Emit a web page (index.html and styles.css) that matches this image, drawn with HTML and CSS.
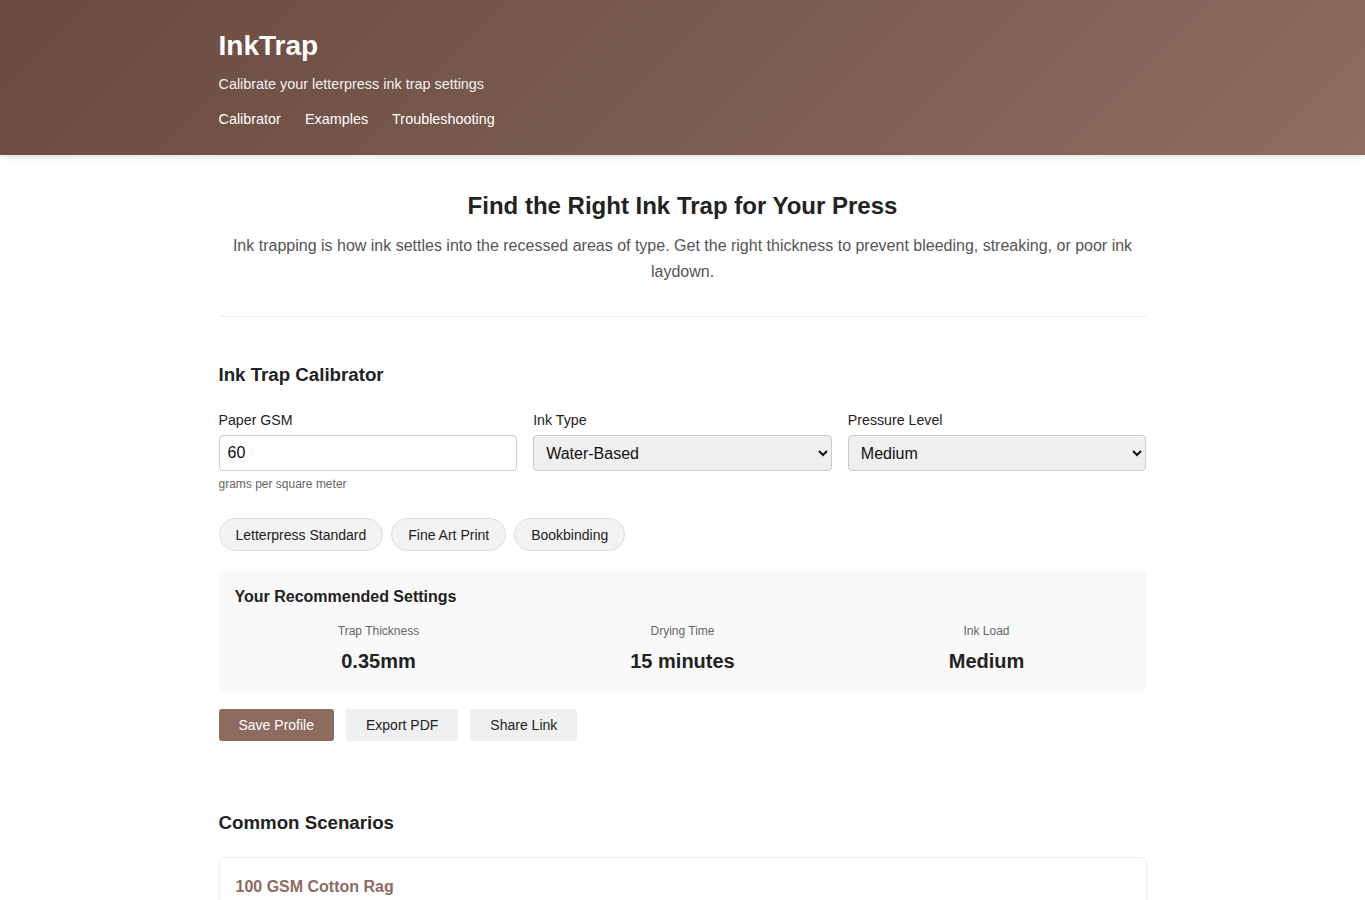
FILE: index.html
```
<!DOCTYPE html>
<html lang="en">
<head>
    <meta charset="UTF-8">
    <title>InkTrap</title>
    <link rel="stylesheet" href="styles.css">
</head>
<body>
    <header class="top">
        <div class="wrap">
            <h1 class="logo">InkTrap</h1>
            <p class="tagline">Calibrate your letterpress ink trap settings</p>
            <nav class="nav">
                <a href="#calc">Calibrator</a>
                <a href="#examples">Examples</a>
                <a href="#help">Troubleshooting</a>
            </nav>
        </div>
    </header>

    <main class="wrap">
        <section class="intro">
            <h2>Find the Right Ink Trap for Your Press</h2>
            <p>Ink trapping is how ink settles into the recessed areas of type. Get the right thickness to prevent bleeding, streaking, or poor ink laydown.</p>
        </section>

        <section class="calc" id="calc">
            <h3 class="sectitle">Ink Trap Calibrator</h3>
            <div class="fields">
                <div class="field">
                    <label for="gsm">Paper GSM</label>
                    <input type="text" id="gsm" value="60">
                    <small>grams per square meter</small>
                </div>
                <div class="field">
                    <label for="ink">Ink Type</label>
                    <select id="ink">
                        <option>Water-Based</option>
                        <option>Oil-Based</option>
                        <option>Rubber-Based</option>
                    </select>
                </div>
                <div class="field">
                    <label for="pressure">Pressure Level</label>
                    <select id="pressure">
                        <option>Light</option>
                        <option selected>Medium</option>
                        <option>Heavy</option>
                    </select>
                </div>
            </div>

            <div class="presets">
                <button class="chip">Letterpress Standard</button>
                <button class="chip">Fine Art Print</button>
                <button class="chip">Bookbinding</button>
            </div>

            <div class="result">
                <h4>Your Recommended Settings</h4>
                <div class="stats">
                    <div class="stat">
                        <span class="stat-label">Trap Thickness</span>
                        <span class="stat-value">0.35mm</span>
                    </div>
                    <div class="stat">
                        <span class="stat-label">Drying Time</span>
                        <span class="stat-value">15 minutes</span>
                    </div>
                    <div class="stat">
                        <span class="stat-label">Ink Load</span>
                        <span class="stat-value">Medium</span>
                    </div>
                </div>
            </div>

            <div class="actions">
                <button class="btn btn-main">Save Profile</button>
                <button class="btn">Export PDF</button>
                <button class="btn">Share Link</button>
            </div>
        </section>

        <section class="examples" id="examples">
            <h3 class="sectitle">Common Scenarios</h3>
            <div class="card">
                <h4>100 GSM Cotton Rag</h4>
                <p>Soft, absorbent stock. Use a thinner trap and lighter pressure to keep counters clean.</p>
            </div>
        </section>
    </main>
</body>
</html>
```

FILE: styles.css
```
*{box-sizing: border-box;}
body{margin: 0;font-family: "Liberation Sans", Arial, sans-serif;color: #222;background: #fff;}
.wrap{max-width: 960px;margin: 0 auto;padding: 0 16px;}

/* header */
.top{background: linear-gradient(135deg, #6a4a3f 0%, #7c5d52 55%, #8f6d61 100%);color: #fff;padding: 31px 0 26px;box-shadow: 0 2px 6px rgba(0,0,0,0.12);}
.logo{margin: 0;font-size: 28px;line-height: 30px;font-weight: bold;}
.tagline{margin: 13px 0 0;font-size: 14.4px;line-height: 20px;opacity: 0.92;}
.nav{display: flex;gap: 24px;margin-top: 15px;}
.nav a{color: #fff;text-decoration: none;font-size: 14.4px;line-height: 20px;}

/* intro */
.intro{text-align: center;padding: 36px 0 31px;border-bottom: 1px solid #eee;}
.intro h2{margin: 0;font-size: 24px;line-height: 30px;}
.intro p{margin: 12px 0 0;font-size: 16px;line-height: 26px;color: #555;}

.sectitle{margin: 0;font-size: 18.7px;line-height: 24px;font-weight: bold;}

/* calculator */
.calc{padding-top: 46px;}
.fields{display: grid;grid-template-columns: repeat(3, 1fr);gap: 16px;margin-top: 24px;}
.field{display: flex;flex-direction: column;}
.field label{font-size: 14.2px;line-height: 18px;margin-bottom: 6px;color: #222;}
.field input, .field select{height: 36px;font-family: inherit;font-size: 16px;border: 1px solid #ccc;border-radius: 4px;padding: 0 8px;color: #111;}
.field input{background: #fff;}
.field select{background: #efefef;}
.field small{font-size: 12px;line-height: 14px;color: #666;margin-top: 6px;}

.presets{display: flex;gap: 8px;margin-top: 27px;}
.chip{font-family: inherit;font-size: 14px;color: #222;background: #f3f3f3;border: 1px solid #ddd;border-radius: 20px;height: 33px;padding: 0 16px;}

.result{margin-top: 18px;background: #f9f9f9;border-radius: 6px;padding: 18px 16px 19px;}
.result h4{margin: 0;font-size: 16px;line-height: 20px;}
.stats{display: grid;grid-template-columns: repeat(3, 1fr);gap: 16px;margin-top: 17px;}
.stat{display: flex;flex-direction: column;align-items: center;text-align: center;}
.stat-label{font-size: 12px;line-height: 14px;color: #666;}
.stat-value{font-size: 20px;line-height: 24px;font-weight: bold;margin-top: 11px;color: #222;}

.actions{display: flex;gap: 12px;margin-top: 17px;}
.btn{font-family: inherit;font-size: 14px;height: 32px;padding: 0 20px;border: none;border-radius: 3px;background: #f0f0f0;color: #222;}
.btn-main{background: #8d6b5f;color: #fff;}

/* examples */
.examples{padding-top: 70px;}
.card{margin-top: 22px;border: 1px solid #eee;border-radius: 6px;padding: 19px 16px;box-shadow: 0 1px 3px rgba(0,0,0,0.04);}
.card h4{margin: 0;font-size: 16px;line-height: 20px;color: #8d6b5f;}
.card p{margin: 10px 0 0;font-size: 14px;line-height: 22px;color: #555;}
```
